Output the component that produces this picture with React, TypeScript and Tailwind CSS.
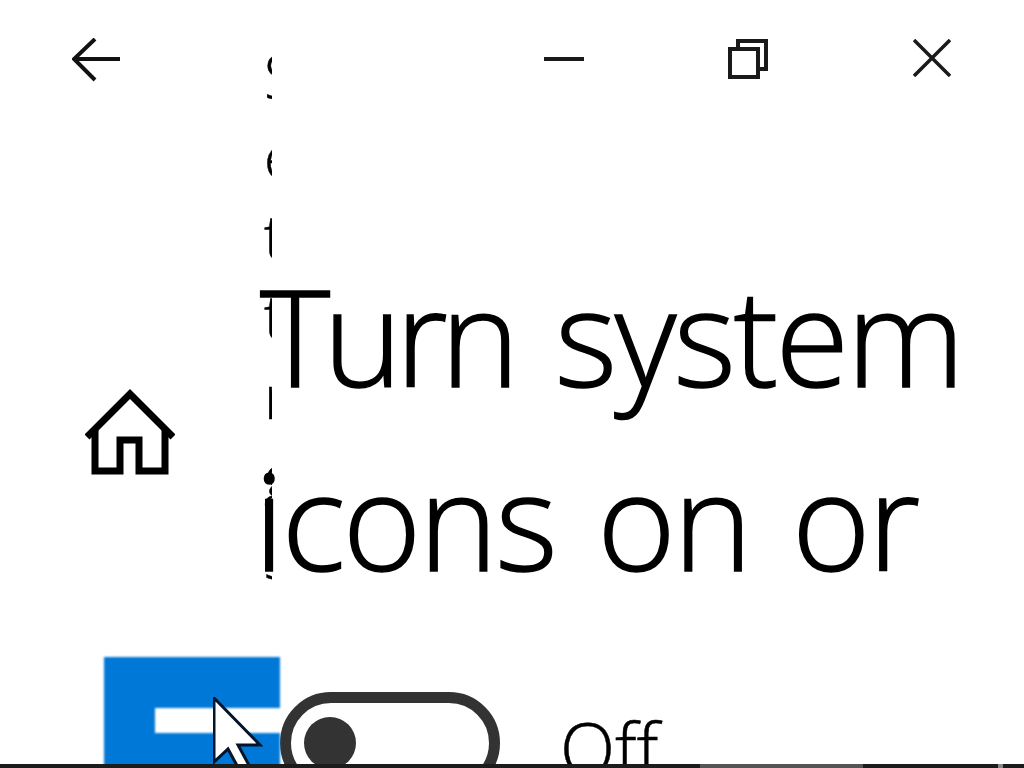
const BackIcon = () => (
  <svg width="50" height="44" viewBox="0 0 50 44" fill="none" stroke="#111" strokeWidth="4">
    <path d="M23 1 L2 21 L23 42 M2 21 H48" />
  </svg>
);

const MinimizeIcon = () => <div className="w-10 h-1 bg-[#1a1a1a]" />;

const RestoreIcon = () => (
  <div className="relative w-10 h-10">
    <div className="absolute right-0 top-0 w-8 h-8 border-4 border-[#1a1a1a]" />
    <div className="absolute left-0 bottom-0 w-8 h-8 border-4 border-[#1a1a1a] bg-white" />
  </div>
);

const CloseIcon = () => (
  <svg width="38" height="38" viewBox="0 0 38 38" fill="none" stroke="#1a1a1a" strokeWidth="3.5">
    <path d="M1 1 L37 37 M37 1 L1 37" />
  </svg>
);

const HomeIcon = () => (
  <svg width="90" height="86" viewBox="0 0 90 86" fill="none" stroke="#000" strokeWidth="7">
    <path d="M2 48 L45 5 L88 48" />
    <path d="M10 39 V82 H35 V51 H54 V82 H80 V39" />
  </svg>
);

const Cursor = () => (
  <svg width="50" height="72" viewBox="0 0 50 72">
    <path d="M1 1 V65 L15 52 L27 74 L37 70 L25 48 L47 48 Z" fill="#fff" stroke="#05142a" strokeWidth="3" />
  </svg>
);

export default function App() {
  const letters = ["S", "e", "t", "t", "n", "g", "s"];
  return (
    <div className="relative w-[1024px] h-[768px] overflow-hidden bg-white font-['Open_Sans','Noto_Sans',sans-serif] text-black">
      <div className="flex h-full">
        <div className="w-[260px] shrink-0 flex flex-col">
          <div className="h-[118px] shrink-0 pl-[72px] pt-[38px]">
            <BackIcon />
          </div>
          <div className="shrink-0 pl-[85px] pt-[271px]">
            <HomeIcon />
          </div>
          <div className="shrink-0 ml-[104px] mt-[182px] w-[176px] h-[120px] bg-[#0078d7] pt-[51px] pl-[51px] blur-[1px]">
            <div className="h-[25px] bg-white" />
          </div>
        </div>
        <div className="flex-1 flex flex-col">
          <div className="flex shrink-0 h-[118px] pt-[39px] pl-[284px]">
            <div className="w-[40px] h-10 flex items-center"><MinimizeIcon /></div>
            <div className="ml-[144px]"><RestoreIcon /></div>
            <div className="ml-[145px]"><CloseIcon /></div>
          </div>
          <div className="shrink-0 text-[134px] leading-[184px] font-light mt-[125px] tracking-[-2.6px] w-[764px] whitespace-nowrap [-webkit-text-stroke:1.5px_#000]">
            <div className="[word-spacing:10px]">
              <span className="tracking-[-7px]">Turn</span> system
            </div>
            <div className="-ml-[6px] [word-spacing:10px]">icons on or</div>
          </div>
          <div className="flex shrink-0 items-center mt-[81px] pl-[20px]">
            <div className="w-[220px] h-[102px] shrink-0 rounded-full border-[11px] border-[#333] bg-white pl-[13px] flex items-center">
              <div className="w-[52px] h-[52px] rounded-full bg-[#333]" />
            </div>
            <div className="ml-[60px] mt-[8px] text-[72px] font-light leading-none [-webkit-text-stroke:0.5px_#000]">Off</div>
          </div>
        </div>
      </div>
      <div className="absolute left-[264px] top-[36px] w-[8px] overflow-hidden text-[60px] leading-[80px] font-light [-webkit-text-stroke:0.5px_#000]">
        {letters.map((l, i) => (
          <div key={i}>{l}</div>
        ))}
      </div>
      <div className="absolute left-[213px] top-[697px]">
        <Cursor />
      </div>
      <div className="absolute left-0 right-0 bottom-0 h-1 flex bg-[#1c1c1c]">
        <div className="ml-[700px] w-[163px] bg-[#555]" />
        <div className="ml-[135px] w-[5px] bg-[#888]" />
      </div>
    </div>
  );
}
